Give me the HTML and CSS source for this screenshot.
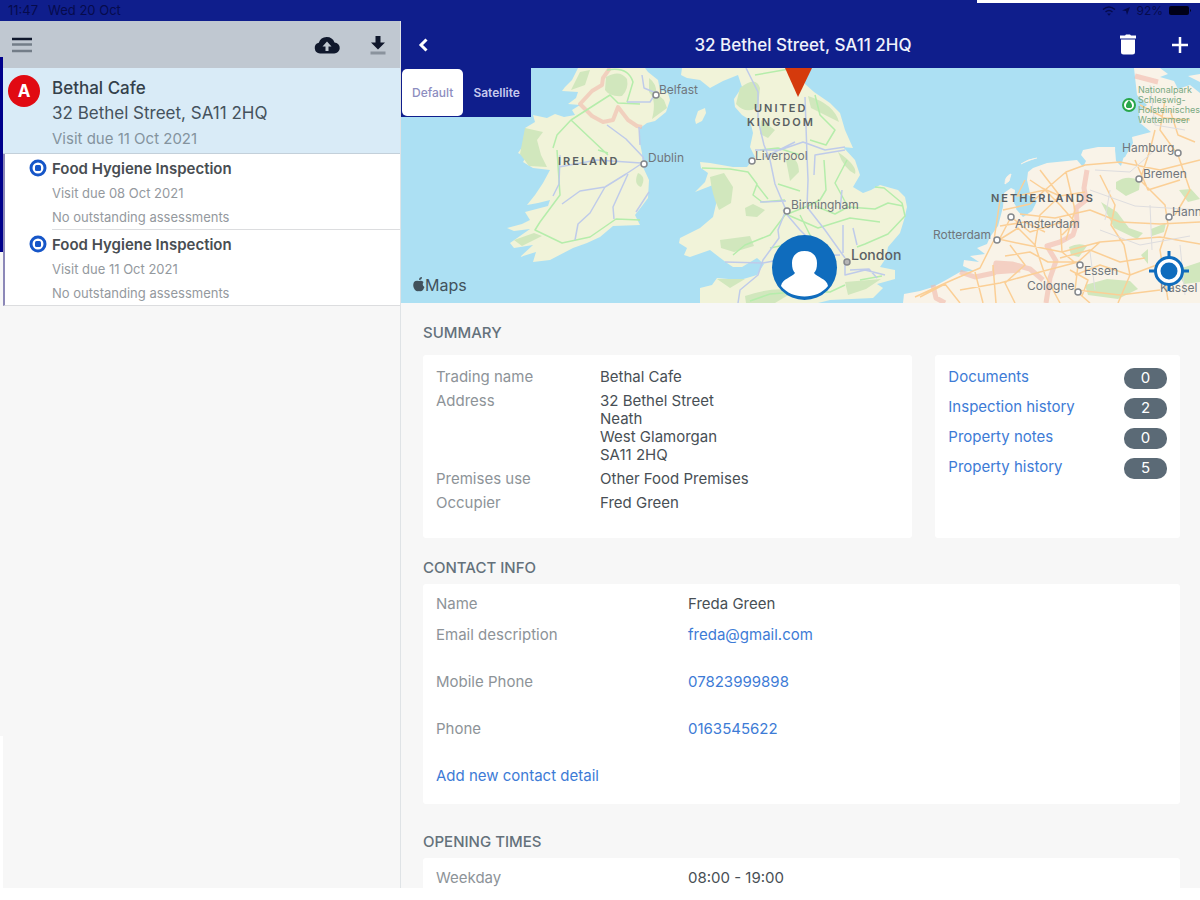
FILE: index.html
```html
<!DOCTYPE html>
<html lang="en">
<head>
<meta charset="utf-8">
<meta name="viewport" content="width=device-width, initial-scale=1">
<title>32 Bethel Street, SA11 2HQ</title>
<link rel="stylesheet" href="styles.css">
</head>
<body>
<div class="app">
  <div class="status-bar">
    <div class="status-group"><span>11:47</span><span>Wed 20 Oct</span></div>
    <div class="status-group status-right">
      <svg width="14" height="10" viewBox="0 0 14 10" aria-hidden="true"><path d="M1 3.500Q7-1.500 13 3.500M3.500 6Q7 3 10.500 6" fill="none" stroke="currentColor" stroke-width="1.500"/><path d="M5 7.500h4L7 9.800z" fill="currentColor"/></svg>
      <svg width="8" height="8" viewBox="0 0 8 8" aria-hidden="true"><path d="M8 0 5 8 4 4 0 3.500z" fill="currentColor"/></svg>
      <span>92%</span>
      <svg width="23" height="9" viewBox="0 0 23 9" aria-hidden="true"><rect width="20" height="9" rx="2" fill="#000018"/><path d="M21 3v3q2-1.500 0-3" fill="#000018"/></svg>
    </div>
  </div>

  <div class="split">
    <aside class="sidebar">
      <div class="toolbar">
        <button class="icon-button" type="button" aria-label="Menu">
          <svg width="20" height="16" viewBox="0 0 20 16"><path d="M0 2h20" stroke="#10182c" stroke-width="2.500"/><path d="M0 7.500h20M0 14h20" stroke="#737d88" stroke-width="2.500"/></svg>
        </button>
        <div class="toolbar-actions">
          <button class="icon-button" type="button" aria-label="Upload">
            <svg width="26" height="18" viewBox="0 0 26 18"><path d="M6 17.500a5.500 5.500 0 0 1-1.200-10.800A8.300 8.300 0 0 1 20.500 6.500 5.500 5.500 0 0 1 20 17.500z" fill="#10182c"/><path d="M13 5.500 8.500 10.500h3V15h3v-4.500h3z" fill="#c0c8d1"/></svg>
          </button>
          <button class="icon-button" type="button" aria-label="Download">
            <svg width="16" height="20" viewBox="0 0 16 20"><path d="M5.500 1h5v6.500H15L8 14.500 1 7.500h4.500z" fill="#10182c"/><path d="M.5 18h15" stroke="#8a939d" stroke-width="3"/></svg>
          </button>
        </div>
      </div>
      <div class="visits">
        <div class="property">
          <span class="rating">A</span>
          <div class="property-text">
            <p class="property-name">Bethal Cafe</p>
            <p class="property-address">32 Bethel Street, SA11 2HQ</p>
            <p class="property-due">Visit due 11 Oct 2021</p>
          </div>
        </div>
        <div class="inspection">
          <svg class="target" width="18" height="18" viewBox="0 0 18 18" aria-hidden="true"><circle cx="9" cy="9" r="7" fill="#fff" stroke="#1656c8" stroke-width="3"/><rect x="6" y="6" width="6" height="6" rx="1.500" fill="#1656c8"/></svg>
          <div class="inspection-text">
            <p class="inspection-name">Food Hygiene Inspection</p>
            <p class="inspection-note">Visit due 08 Oct 2021</p>
            <p class="inspection-note">No outstanding assessments</p>
          </div>
        </div>
        <div class="inspection">
          <svg class="target" width="18" height="18" viewBox="0 0 18 18" aria-hidden="true"><circle cx="9" cy="9" r="7" fill="#fff" stroke="#1656c8" stroke-width="3"/><rect x="6" y="6" width="6" height="6" rx="1.500" fill="#1656c8"/></svg>
          <div class="inspection-text">
            <p class="inspection-name">Food Hygiene Inspection</p>
            <p class="inspection-note">Visit due 11 Oct 2021</p>
            <p class="inspection-note">No outstanding assessments</p>
          </div>
        </div>
      </div>
    </aside>

    <main class="detail">
      <header class="titlebar">
        <button class="icon-button" type="button" aria-label="Back">
          <svg width="10" height="14" viewBox="0 0 10 14"><path d="M8.500 1.500 3 7l5.500 5.500" fill="none" stroke="#fff" stroke-width="3"/></svg>
        </button>
        <h1 class="title">32 Bethel Street, SA11 2HQ</h1>
        <div class="titlebar-actions">
          <button class="icon-button" type="button" aria-label="Delete">
            <svg width="18" height="21" viewBox="0 0 18 21"><path d="M1 1.500h5L7 .5h4l1 1h5v3H1zM2 5.500h14V18q0 2.500-2.500 2.500h-9Q2 20.500 2 18z" fill="#fff"/></svg>
          </button>
          <button class="icon-button" type="button" aria-label="Add">
            <svg width="16" height="16" viewBox="0 0 16 16"><path d="M8 0v16M0 8h16" stroke="#fff" stroke-width="2.500"/></svg>
          </button>
        </div>
      </header>

      <div class="map">
        <svg class="map-canvas" viewBox="401 68 799 235" preserveAspectRatio="xMidYMid slice" role="img" aria-label="Map of Ireland, the United Kingdom and the Netherlands">
          <rect x="401" y="68" width="799" height="235" fill="#ace0f3"/>
          <g fill="#f1f3d9">
            <path d="M578 68 572 80 565 87 562 91 578 92 576 98 568 104 580 105 572 110 575 115 564 117 555 114 547 118 533 115 535 122 525 128 531 135 525 143 518 153 526 157 523 162 533 168 550 170 543 183 535 195 527 205 538 203 550 200 548 206 525 212 530 220 522 224 507 228 514 231 530 229 510 243 514 248 533 245 520 257 536 252 533 262 550 260 573 248 587 243 600 237 613 226 640 225 635 215 642 206 648 198 649 180 643 167 642 153 640 143 640 128 647 123 655 121 666 112 670 100 668 93 660 90 658 80 648 72 645 68z"/>
            <path d="M682 68 681 75 687 78 700 80 710 88 723 81 738 75 742 87 734 99 735 107 742 115 750 120 753 133 750 147 755 157 747 167 733 167 710 163 700 162 701 168 708 173 705 182 695 192 713 185 717 200 713 217 700 228 680 238 679 243 687 248 684 255 690 257 710 250 719 257 727 263 733 267 742 267 757 258 764 264 757 275 740 280 717 278 712 285 700 288 700 303H818L830 300 873 298 883 288 877 284 895 279 895 270 880 267 886 258 888 247 900 233 904 220 907 207 905 197 898 190 880 185 871 190 863 193 853 187 860 175 855 160 843 147 853 148 845 130 840 113 830 103 814 92 805 84 800 68z"/>
            <path d="M695 120 698 111 705 108 706 113 702 121 696 124z"/>
          </g>
          <path d="M903 303 904 294 920 291 933 287 946 280 960 272 974 271 963 266 964 260 979 262 970 256 985 254 977 248 987 244 990 237 998 226 1003 207 1004 193 1011 188 1015 190 1014 203 1020 213 1024 205 1020 197 1030 193 1027 180 1028 172 1033 168 1047 163 1077 160 1083 167 1086 161 1081 155 1083 150 1098 147 1115 147 1117 160 1125 157 1133 143 1132 137 1151 132 1140 123 1139 111 1147 105 1137 95 1134 68H1200V303z" fill="#f9f3e8"/>
          <path d="M1160 68l8 6-8 3 14 4 4 8 12-4 10 8V82l-12-6 12-2v-6zM1115 148l9 8-3 10-5-5zM1019 197l8-3 10 7-5 10-9 6-7-8z" fill="#ace0f3"/>
          <path d="M1005 184q0-8 6-10l-2 7zM1021 164q7-5 16-6" fill="#f9f3e8" stroke="#f9f3e8"/>
          <g fill="#d1e7bd">
            <path d="M606 77q14-8 21 2 2 10-5 17-12 1-17-6zM580 72l10-2-5 15-14 5zM649 78q8 6 7 15l8 7 3 8-15 11q5-19-3-27zM525 128l18 4-6 8 4 15 6 12-18-1-9-12zM514 240l20-7 8 3-20 10zM638 173q9 4 3 14-8-3-3-14z"/>
            <path d="M740 88q16-13 20 0l-2 19q-12 8-22-3zM761 120l14 10-7 8-8-4zM808 96q26 8 31 26l-28-14zM710 177l14-4 9 14-2 16-12 7q-7-15-9-33zM745 208l8-4 12 6-8 7-11-1zM720 240l30-4 4 10-20 6-13-4zM786 160q12-6 13 12l-9 9zM838 152q20 14 17 22-11-5-17-22zM845 282l36-3-15 10-18 6zM745 296q30-10 50-5l-20 12h-29zM717 279h28l-15 9z"/>
            <path d="M1116 182q12-8 24-1l-1 9-13 6-10-7zM1101 202l16 10 12 16 14 5-6 6-23-11zM1069 247q10-5 18-1l-8 11-8-2zM1151 229l15-6-2 9-12 4zM1085 285l22-6 23 2 8 8-20 10-30-4zM1179 190l12-1 9 10-12 3zM1141 255l7-6v15zM1176 270l24-8v20l-16 2z"/>
          </g>
          <g fill="none" stroke="#f2b9ac" stroke-linejoin="round" opacity=".6">
            <path d="M610 68 603 78 602 85 592 91 580 104 592 116 603 122 613 120 618 107 628 120 637 126 642 127" stroke-width="4"/>
            <path d="M1135 76 1158 82M1087 170 1084 188 1086 200 1076 208 1077 222 1073 235 1060 242 1047 246 1056 261 1050 278 1046 303M960 272 975 277 994 273 996 263 1012 264 1030 269 1043 280M933 285 936 298 945 303" stroke-width="5"/>
            <path d="M994 270 1020 268" stroke-width="9"/>
          </g>
          <path d="M1000 200 994 240 980 268 950 281 915 297M994 238 1022 244 1062 252 1100 242 1160 237 1200 244M1003 210 1030 204 1045 190 1066 172 1085 165 1120 162 1160 170 1200 160M1030 180 1042 188 1060 196 1085 192M1040 170 1060 196 1040 215 1035 245 1045 275 1060 303M1020 214 1055 218 1090 210 1120 222 1160 224 1200 222M960 290 1000 283 1040 272 1078 262 1100 242M975 272 983 303M993 265 996 303M1010 245 1025 265 1005 283 1015 303M1100 175 1115 205 1111 225 1124 245 1130 275 1118 303M1140 180 1165 205 1168 225 1160 250 1168 300M1155 130 1150 150 1140 180M1178 155 1160 130 1165 100M1178 155 1190 190 1175 215M1060 218 1062 252 1078 265 1075 290 1090 303M1066 240 1075 210 1066 172M1140 105 1165 118 1190 120M1025 180 1017 196 1045 190 1060 205 1075 222 1062 235M1075 275 1100 265 1130 275 1170 260M920 297 945 284 960 303M1077 290 1120 295 1160 290M1135 160 1148 190 1180 180M1170 110 1178 135 1195 142M1035 245 1018 228 999 240 1011 217 1030 232 1062 222M1005 256 1030 252 1048 262 1080 262M1000 226 1025 222 1045 232M1070 270 1088 280 1082 296M1060 258 1090 250 1120 262 1145 258" fill="none" stroke="#fbcf96" stroke-width="1.500" stroke-linejoin="round"/>
          <path d="M1095 170 1130 172 1155 150M1090 190 1135 206 1200 210M1100 230 1140 245 1190 236M1090 252 1095 290M1110 190 1105 220M1150 205 1152 250M1180 245 1185 295M1150 85 1155 125 1185 130" fill="none" stroke="#dedddf" stroke-width="1"/>
          <g fill="none" stroke="#b5edab" stroke-width="1.500" stroke-linejoin="round">
            <path d="M571 120 590 138 608 155M571 120 557 135 553 148M607 70Q628 66 633 82L627 102M571 120 610 95 618 103 640 104M557 150 560 195 540 222 535 230 562 243 590 237 616 219 640 220M598 150 608 153"/>
            <path d="M702 168 730 169 748 172 757 184 753 195 762 202 785 200M755 75 795 68M815 95 820 115 835 130 826 145 810 140M760 150 778 148 800 155M778 184 800 191M733 255 745 245 770 235 785 215 808 206 820 200 826 190 824 160M815 206 835 214 848 207 875 209 888 203 903 206M875 187 884 188 902 203 905 216 888 234 865 244 857 247M848 207 835 183 847 160M800 215 815 245 836 262M845 285 830 292 795 292 770 294 750 301M788 215 818 228 850 218 880 222M770 248 785 245M860 280 882 276M757 185 768 199"/>
          </g>
          <g fill="none" stroke="#bfcbea" stroke-width="1.500" stroke-linejoin="round">
            <path d="M641 164 626 174 605 187 580 191 562 204M628 174 613 207 614 219M605 187 590 213 578 224 575 240M560 155 559 184 553 196M645 168 643 157 626 139 607 125M640 145 639 127M627 102H650L657 91M649 192 636 212M559 167 597 160 641 163M642 75 644 88 656 93"/>
            <path d="M746 68 758 92 758 120 764 145 770 160 775 184 786 210 778 230 779 238 763 260 758 275 740 290 738 303M805 97 807 155 808 180 807 207 825 230 845 258M755 150 780 150 803 142 825 150 845 147M783 210 800 230 818 248M786 201 760 202M765 157 795 142M842 190 840 210M853 228 857 245M845 265 845 275 865 270 885 275M850 270 869 269 877 278M725 262 763 263 800 256 840 255M843 225 843 253M814 175 815 155 845 150"/>
          </g>
          <g fill="#fff" stroke="#85888c" stroke-width="1.500">
            <circle cx="656" cy="95" r="3"/><circle cx="644" cy="164" r="3"/><circle cx="752" cy="161" r="3"/><circle cx="787" cy="211" r="3"/><circle cx="847" cy="262" r="3" fill="#b5b5b5"/><circle cx="1011" cy="217" r="3"/><circle cx="997" cy="240" r="3"/><circle cx="1178" cy="153" r="3"/><circle cx="1139" cy="179" r="3"/><circle cx="1169" cy="217" r="3"/><circle cx="1080" cy="265" r="3"/><circle cx="1078" cy="292" r="3"/>
          </g>
          <g class="map-city">
            <text x="659" y="94">Belfast</text><text x="648" y="162">Dublin</text><text x="755" y="160">Liverpool</text><text x="791" y="209">Birmingham</text>
            <text x="1015" y="228">Amsterdam</text><text x="933" y="239">Rotterdam</text><text x="1122" y="152">Hamburg</text><text x="1143" y="178">Bremen</text><text x="1172" y="216">Hann</text><text x="1084" y="275">Essen</text><text x="1027" y="290">Cologne</text><text x="1160" y="292">Kassel</text>
          </g>
          <text class="map-capital" x="851" y="260">London</text>
          <g class="map-country">
            <text x="558" y="165">IRELAND</text><text x="754" y="112">UNITED</text><text x="747" y="126">KINGDOM</text><text x="991" y="202">NETHERLANDS</text>
          </g>
          <g class="map-park">
            <text x="1138" y="93">Nationalpark</text><text x="1138" y="103">Schleswig-</text><text x="1138" y="113">Holsteinisches</text><text x="1138" y="123">Wattenmeer</text>
          </g>
          <circle cx="1129" cy="105" r="6" fill="#fff" stroke="#29a64a" stroke-width="2"/>
          <path d="M1129 100q-5 6-2 8h4q3-2-2-8" fill="#29a64a"/>
          <path d="M785 68h27l-14 29z" fill="#d53a0c"/>
          <circle cx="804.500" cy="267.500" r="32.500" fill="#0f6cbd"/>
          <path d="M804.500 251c8 0 12.500 5 12.500 12 0 5-1 8-3 10 3 4 13 6 14 13-11 14-36 14-47 0 1-7 11-9 14-13-2-2-3-5-3-10 0-7 4.500-12 12.500-12z" fill="#fff"/>
          <g fill="#42525c"><path d="M419 281q-3-1-5 1-2 4 1 8 2 2 4 1 2 1 4-1l1.500-3q-3-2-1-5-2-2-4.500-1zM419 280q0-3 3-3 0 3-3 3"/><text class="map-brand" x="425" y="291">Maps</text></g>
        </svg>
        <div class="map-tabs">
          <button class="map-tab map-tab-active" type="button">Default</button>
          <button class="map-tab" type="button">Satellite</button>
        </div>
        <button class="icon-button locate" type="button" aria-label="Show my location">
          <svg width="40" height="40" viewBox="0 0 40 40"><circle cx="20" cy="20" r="13.500" fill="#fff" stroke="#0f6cbd" stroke-width="3"/><circle cx="20" cy="20" r="8.500" fill="#0f6cbd"/><path d="M20 0v8M20 32v8M0 20h8M32 20h8" stroke="#0f6cbd" stroke-width="3"/></svg>
        </button>
      </div>

      <div class="sections">
        <section class="section">
          <h2 class="heading heading-wide">SUMMARY</h2>
          <div class="summary">
            <dl class="card facts facts-summary">
              <dt>Trading name</dt><dd>Bethal Cafe</dd>
              <dt>Address</dt><dd>32 Bethel Street<br>Neath<br>West Glamorgan<br>SA11 2HQ</dd>
              <dt>Premises use</dt><dd>Other Food Premises</dd>
              <dt>Occupier</dt><dd>Fred Green</dd>
            </dl>
            <ul class="card links">
              <li class="link-row"><a href="#documents">Documents</a><span class="badge">0</span></li>
              <li class="link-row"><a href="#inspections">Inspection history</a><span class="badge">2</span></li>
              <li class="link-row"><a href="#notes">Property notes</a><span class="badge">0</span></li>
              <li class="link-row"><a href="#history">Property history</a><span class="badge">5</span></li>
            </ul>
          </div>
        </section>
        <section class="section">
          <h2 class="heading">CONTACT INFO</h2>
          <div class="card contact">
            <dl class="facts facts-name"><dt>Name</dt><dd>Freda Green</dd></dl>
            <dl class="facts facts-contact">
              <dt>Email description</dt><dd><a href="mailto:freda@gmail.com">freda@gmail.com</a></dd>
              <dt>Mobile Phone</dt><dd><a href="tel:07823999898">07823999898</a></dd>
              <dt>Phone</dt><dd><a href="tel:0163545622">0163545622</a></dd>
            </dl>
            <a class="add-contact" href="#add">Add new contact detail</a>
          </div>
        </section>
        <section class="section">
          <h2 class="heading">OPENING TIMES</h2>
          <div class="card contact">
            <dl class="facts facts-name"><dt>Weekday</dt><dd>08:00 - 19:00</dd></dl>
          </div>
        </section>
      </div>
    </main>
  </div>
</div>
</body>
</html>
```

FILE: styles.css
```css
* { box-sizing: border-box; }

body {
  margin: 0;
  background: #fff;
  color: #484f55;
  font-family: Inter, "Liberation Sans", sans-serif;
  font-size: 15px;
}

p, h1, h2, dl, dd, ul { margin: 0; padding: 0; }
a { color: #3d7bd6; text-decoration: none; }

.app {
  position: relative;
  display: flex;
  flex-direction: column;
  height: calc(100vh - 12px);
  background: #f7f7f7;
}

/* slivers of the windows behind the app */
.app::before {
  content: "";
  position: absolute;
  z-index: 1;
  left: 0;
  top: 57px;
  bottom: 0;
  width: 3px;
  background:
    linear-gradient(#00008b, #00008b) top / 3px 195px no-repeat,
    linear-gradient(#fff, #fff) bottom / 3px 152px no-repeat;
}
.app::after {
  content: "";
  position: absolute;
  right: 0;
  top: 0;
  width: 223px;
  height: 3px;
  background: #fff;
}

.icon-button {
  display: flex;
  padding: 0;
  border: 0;
  background: none;
  cursor: pointer;
}

.status-bar {
  display: flex;
  flex: none;
  justify-content: space-between;
  height: 21px;
  padding: 0 8px;
  background: #0f1e8c;
  color: #060b4c;
  font-size: 13px;
  line-height: 21px;
}
.status-group { display: flex; align-items: center; gap: 10px; }
.status-right { gap: 6px; font-size: 12px; }

.split {
  display: grid;
  flex: 1;
  grid-template-columns: minmax(0, 1fr) minmax(0, 2fr);
  min-height: 0;
}

.toolbar {
  display: flex;
  align-items: center;
  justify-content: space-between;
  height: 47px;
  padding: 0 14px 0 12px;
  background: #c0c8d1;
}
.toolbar-actions { display: flex; align-items: center; gap: 30px; }

.visits { padding-left: 3px; background: linear-gradient(90deg, #f7f7f7 3px, #fff 3px); }

.property {
  display: flex;
  gap: 12px;
  padding: 8px 5px 2px;
  border-bottom: 1px solid #c3d0da;
  background: #d9ebf7;
  line-height: 25px;
}
.rating {
  flex: none;
  width: 32px;
  height: 32px;
  margin-top: -1px;
  border-radius: 50%;
  background: #e10a12;
  color: #fff;
  font-size: 17px;
  font-weight: 700;
  line-height: 32px;
  text-align: center;
}
.property-name { color: #34404a; font-size: 17px; font-weight: 500; }
.property-address { color: #45525d; font-size: 17px; }
.property-due { color: #84939e; font-size: 15px; }

.inspection {
  display: flex;
  gap: 5px;
  padding-left: 26px;
  border-left: 2px solid #8c88b8;
  background: #fff;
}
.inspection:last-child { border-bottom: 1px solid #dcdddf; }
.inspection:not(:last-child) .inspection-text { border-bottom: 1px solid #dcdddf; }
.target { flex: none; margin-top: 5px; margin-left: -2px; }
.inspection-text { flex: 1; padding-top: 2px; line-height: 24px; }
.inspection-name { color: #484d52; font-size: 15px; font-weight: 600; line-height: 25px; }
.inspection-note { color: #94999e; font-size: 13px; }

.detail {
  display: flex;
  flex-direction: column;
  min-width: 0;
  overflow: hidden;
  border-left: 1px solid #dfe3e6;
}
.titlebar {
  display: grid;
  flex: none;
  grid-template-columns: 1fr auto 1fr;
  align-items: center;
  height: 47px;
  padding: 0 12px 0 17px;
  background: #0f1e8c;
}
.title { color: #f0f2fb; font-size: 17px; font-weight: 500; line-height: 24px; }
.titlebar-actions { display: flex; align-items: center; justify-content: flex-end; gap: 35px; }

.map { position: relative; flex: none; height: 235px; }
.map-canvas { display: block; width: 100%; height: 100%; }
.map-city { fill: #70767b; font-size: 12px; }
.map-capital { fill: #5a6065; font-size: 14px; font-weight: 500; }
.map-country { fill: #5a5f62; font-size: 11px; font-weight: 600; letter-spacing: 2px; }
.map-park { fill: #79a983; font-size: 9px; }
.map-brand { font-size: 16px; }
.map-tabs {
  position: absolute;
  top: 0;
  left: 0;
  display: flex;
  padding: 1px;
  background: #0f1e8c;
}
.map-tab {
  height: 47px;
  padding: 0 10px;
  border: 0;
  border-radius: 5px;
  background: none;
  color: #c7caec;
  font-family: inherit;
  font-size: 12px;
  font-weight: 600;
}
.map-tab-active { background: #fff; color: #8d8dbf; font-weight: 500; }
.locate { position: absolute; right: 11px; bottom: 12px; }

.sections { padding: 19px 20px 0 22px; }
.section { margin-bottom: 19px; }
.section + .section { margin-bottom: 27px; }
.heading {
  margin-bottom: 5px;
  color: #64717b;
  font-size: 15px;
  font-weight: 500;
  line-height: 22px;
}
.heading-wide { margin-bottom: 11px; }
.card { border-radius: 3px; background: #fff; }

.summary { display: grid; grid-template-columns: minmax(0, 2fr) minmax(0, 1fr); gap: 23px; }
.facts { display: grid; line-height: 18px; }
.facts dt { color: #8d9398; }
.facts-summary {
  grid-template-columns: 164px 1fr;
  row-gap: 6px;
  padding: 13px 13px 26px;
}
.links { padding: 8px 13px; list-style: none; }
.link-row {
  display: flex;
  align-items: center;
  justify-content: space-between;
  height: 30px;
  line-height: 18px;
}
.link-row a { padding-bottom: 3px; }
.badge {
  width: 43px;
  height: 21px;
  border-radius: 10px;
  background: #5b6a76;
  color: #fff;
  line-height: 20px;
  text-align: center;
}

.contact { padding: 11px 13px 19px; }
.facts-name, .facts-contact { grid-template-columns: 252px 1fr; }
.facts-contact { row-gap: 29px; padding: 13px 0 29px; }
.add-contact { display: block; line-height: 18px; }
```
